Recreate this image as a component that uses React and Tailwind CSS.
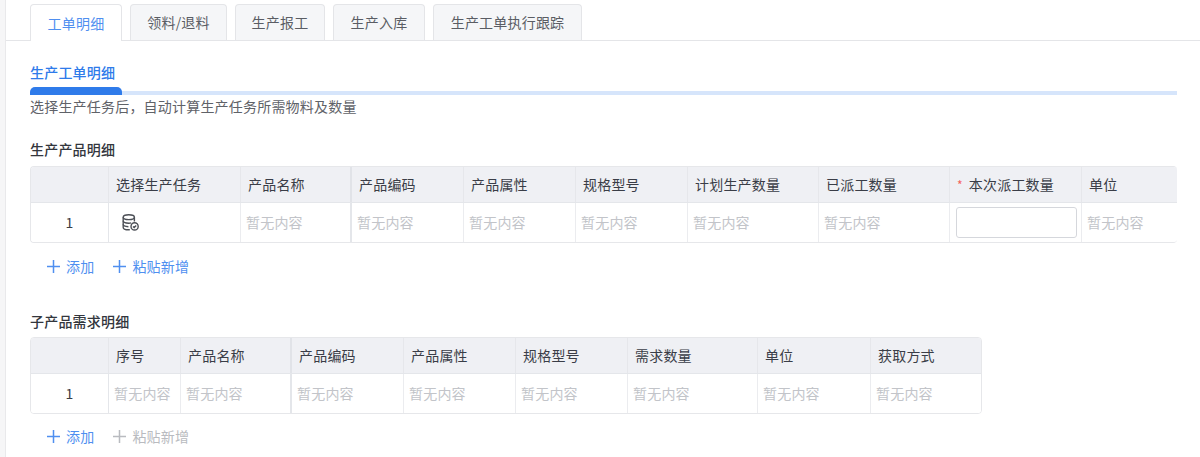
const tabs = [
  { label: '工单明细', width: 'w-[92px]', active: true },
  { label: '领料/退料', width: 'w-[97px]' },
  { label: '生产报工', width: 'w-[90px]' },
  { label: '生产入库', width: 'w-[92px]' },
  { label: '生产工单执行跟踪', width: 'w-[149px]' },
];

const productColumns = [
  { label: '', width: 'w-[78px]' },
  { label: '选择生产任务', width: 'w-[132px]', type: 'icon' },
  { label: '产品名称', width: 'w-[111px]', fixed: true },
  { label: '产品编码', width: 'w-[112px]' },
  { label: '产品属性', width: 'w-[112px]' },
  { label: '规格型号', width: 'w-[112px]' },
  { label: '计划生产数量', width: 'w-[131px]' },
  { label: '已派工数量', width: 'w-[131px]' },
  { label: '本次派工数量', width: 'w-[132px]', type: 'input', required: true },
  { label: '单位', width: 'w-[96px]', last: true },
];

const childColumns = [
  { label: '', width: 'w-[78px]' },
  { label: '序号', width: 'w-[72px]' },
  { label: '产品名称', width: 'w-[111px]', fixed: true },
  { label: '产品编码', width: 'w-[112px]' },
  { label: '产品属性', width: 'w-[112px]' },
  { label: '规格型号', width: 'w-[112px]' },
  { label: '需求数量', width: 'w-[130px]' },
  { label: '单位', width: 'w-[113px]' },
  { label: '获取方式', width: 'w-[112px]', last: true },
];

function TaskIcon() {
  return (
    <svg width="17" height="17" viewBox="0 0 17 17" fill="none" stroke="#4d5057" strokeWidth="1.4">
      <ellipse cx="6.8" cy="3.2" rx="5.6" ry="2.4" />
      <path d="M1.2 3.2v10.2c0 1.3 2.4 2.4 5.6 2.4h1" />
      <path d="M12.4 3.2v4.2" />
      <path d="M1.2 6.8c0 1.3 2.4 2.4 5.6 2.4 .9 0 1.7-.1 2.4-.3" />
      <path d="M1.2 10.3c0 1.3 2.3 2.3 5.2 2.4" />
      <circle cx="12.6" cy="12.4" r="3.6" />
      <path d="M11 12.4l1.2 1.2 2-2.1" />
    </svg>
  );
}

function PlusIcon() {
  return (
    <svg width="13" height="13" viewBox="0 0 13 13" stroke="currentColor" strokeWidth="1.5">
      <path d="M6.5 0v13M0 6.5h13" />
    </svg>
  );
}

function Cell({ column, rowNumber }) {
  const divider = column.last ? '' : column.fixed ? 'border-r-2 border-[#e4e6ea]' : 'border-r border-[#ebecef]';

  if (!column.label) {
    return (
      <div className={`${column.width} shrink-0 flex items-center justify-center border-r border-[#e4e6ea] text-[14px] text-[#3a3d44]`}>
        {rowNumber}
      </div>
    );
  }
  if (column.type === 'icon') {
    return (
      <div className={`${column.width} ${divider} shrink-0 flex items-center pl-[13px]`}>
        <TaskIcon />
      </div>
    );
  }
  if (column.type === 'input') {
    return (
      <div className={`${column.width} ${divider} shrink-0 flex items-center pl-[6px] pr-[4px]`}>
        <input className="w-full h-[31px] rounded-[3px] border border-[#d5d7dc] bg-white outline-none" />
      </div>
    );
  }
  return (
    <div className={`${column.width} ${divider} shrink-0 flex items-center pl-[5px] text-[14px] text-[#c2c4c9]`}>
      暂无内容
    </div>
  );
}

function DetailTable({ columns, className }) {
  return (
    <div className={`${className} rounded-[4px] border border-[#e6e7ea] overflow-hidden`}>
      <div className="flex h-[36px] bg-[#eff0f4] border-b border-[#e4e6ea]">
        {columns.map((column, index) => (
          <div
            key={index}
            className={`${column.width} shrink-0 flex items-center pl-[7px] text-[14px] text-[#3a3d47] ${
              column.last ? '' : column.fixed ? 'border-r-2 border-[#e1e3e8]' : 'border-r border-[#e6e7eb]'
            }`}
          >
            {column.required && <span className="mr-[6px] text-[12px] text-[#f5615c]">*</span>}
            {column.label}
          </div>
        ))}
      </div>
      <div className="flex h-[39px] bg-white">
        {columns.map((column, index) => (
          <Cell key={index} column={column} rowNumber={1} />
        ))}
      </div>
    </div>
  );
}

function TableActions({ pasteDisabled }) {
  return (
    <div className="flex items-center h-[20px] pl-[17px] gap-[19px] text-[14px] text-[#4f8ff0]">
      <span className="flex items-center gap-[6px]">
        <PlusIcon />
        添加
      </span>
      <span className={`flex items-center gap-[6px] ${pasteDisabled ? 'text-[#b9bbc0]' : ''}`}>
        <PlusIcon />
        粘贴新增
      </span>
    </div>
  );
}

export default function App() {
  return (
    <div className="h-[457px] overflow-hidden bg-white flex tracking-[0.2px] font-['Noto_Sans_CJK_SC','Noto_Sans',sans-serif]">
      <div className="w-[6px] shrink-0 bg-[#f6f6f7] border-r border-[#e9e9eb]" />
      <div className="flex-1 min-w-0">
        <div className="flex items-end gap-[8px] h-[41px] pl-[24px] border-b border-[#e4e5e8]">
          {tabs.map((tab) => (
            <div
              key={tab.label}
              className={`${tab.width} h-[36px] flex items-center justify-center rounded-t-[4px] border border-[#e4e5e8] text-[14px] ${
                tab.active
                  ? 'h-[37px] -mb-px border-b-0 bg-white text-[#4f8ff0]'
                  : 'border-b-0 bg-[#f5f6f8] text-[#5a5d64]'
              }`}
            >
              {tab.label}
            </div>
          ))}
        </div>

        <div className="pl-[24px] pr-[23px]">
          <div className="mt-[21px] h-[20px] leading-[20px] text-[14px] font-medium text-[#2f7bea]">生产工单明细</div>
          <div className="mt-[5px] relative h-[8px]">
            <div className="absolute inset-x-0 bottom-0 h-[4px] bg-[#d6e5fb]" />
            <div className="absolute left-0 bottom-0 w-[92px] h-[8px] rounded-t-[5px] bg-[#2f7bea]" />
          </div>
          <div className="mt-[1px] h-[20px] leading-[20px] text-[14px] text-[#5f6268]">选择生产任务后，自动计算生产任务所需物料及数量</div>

          <div className="mt-[23px] h-[20px] leading-[20px] text-[14px] font-medium text-[#33363d]">生产产品明细</div>
          <DetailTable columns={productColumns} className="mt-[7px] w-[1147px] border-r-0" />
          <div className="mt-[13px]">
            <TableActions />
          </div>

          <div className="mt-[35px] h-[20px] leading-[20px] text-[14px] font-medium text-[#33363d]">子产品需求明细</div>
          <DetailTable columns={childColumns} className="mt-[6px] w-[952px]" />
          <div className="mt-[12px]">
            <TableActions pasteDisabled />
          </div>
        </div>
      </div>
    </div>
  );
}
